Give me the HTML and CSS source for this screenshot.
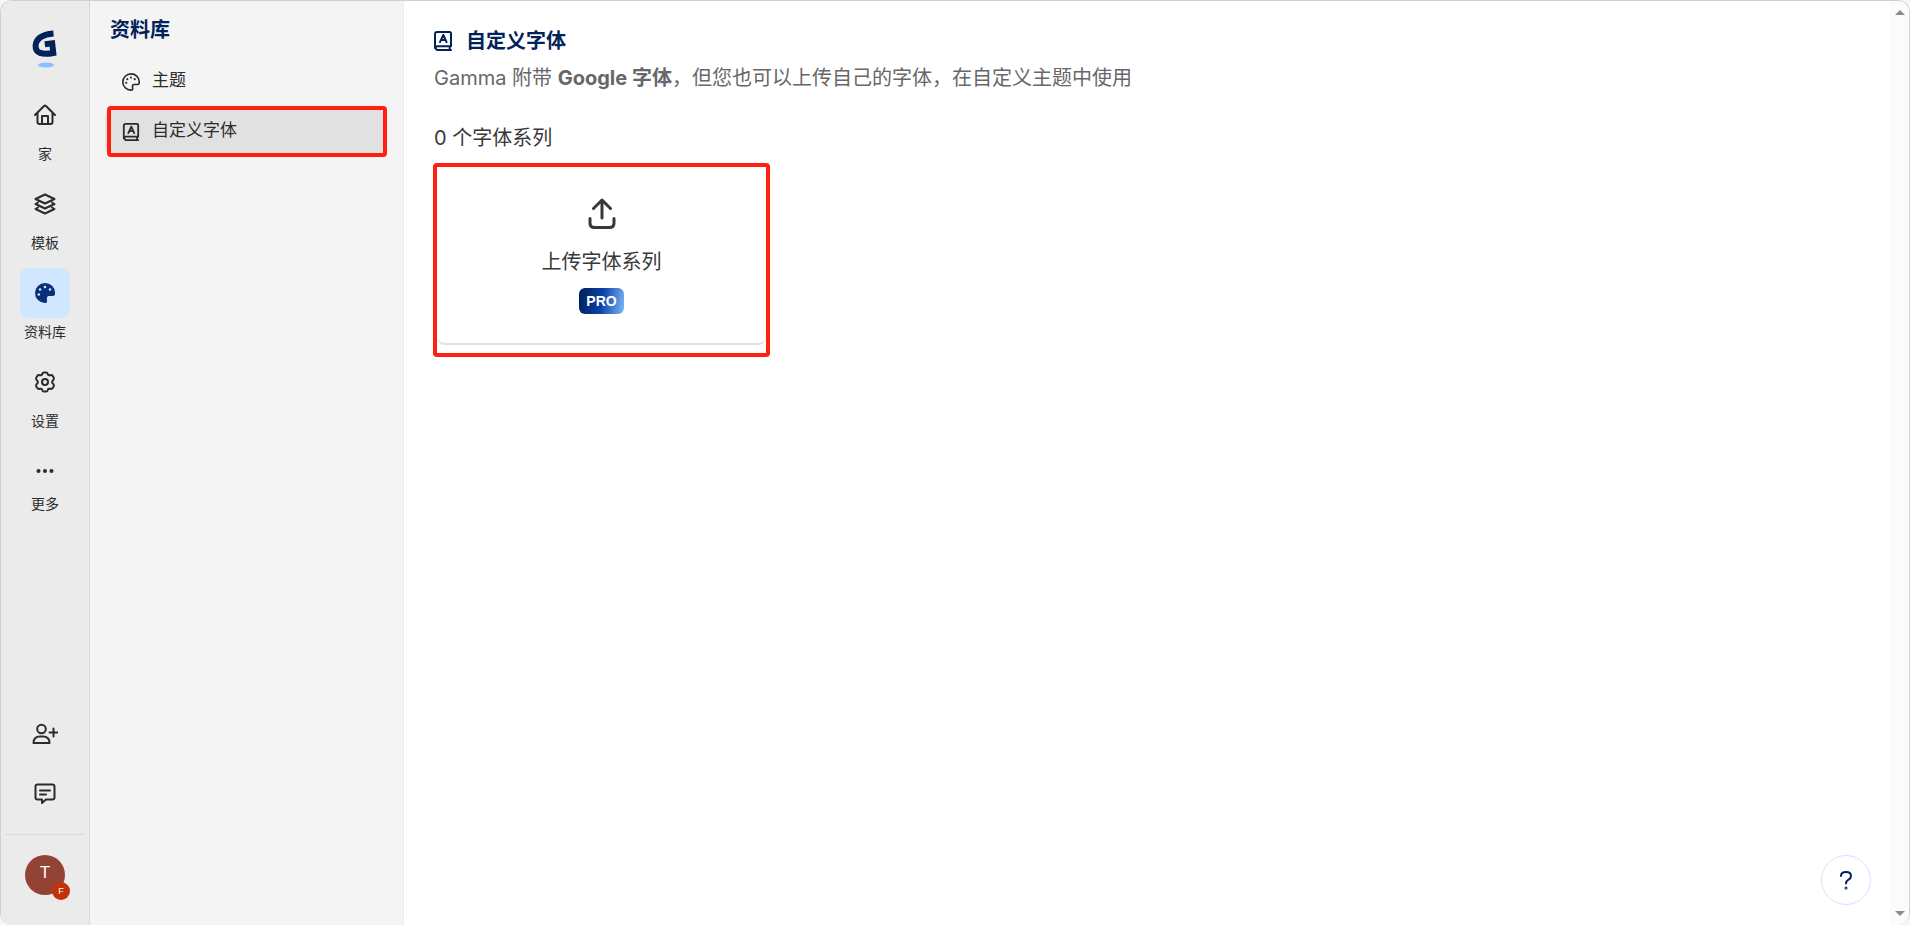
FILE: index.html
```
<!DOCTYPE html>
<html lang="zh-CN">
<head>
    <meta charset="UTF-8">
    <meta name="viewport" content="width=device-width, initial-scale=1.0">
    <title>自定义字体</title>
    <link rel="stylesheet" href="styles.css">
</head>
<body>
    <!-- shared icons -->
    <svg class="sprite" width="0" height="0" aria-hidden="true">
        <symbol id="icon-font-book" viewBox="0 0 18 20">
            <path d="M1 17V3.200Q1 1 3.200 1H15.500Q17 1 17 2.500V15.200H3.100A2 2 0 0 0 3.100 19H17M15.700 15.200V19"/>
            <path d="M6 11.200L9.300 4L12.600 11.200M7.200 9H11.400"/>
        </symbol>
    </svg>

    <div class="app">
        <nav class="rail" aria-label="主导航">
            <a href="#" class="logo" aria-label="Gamma">
                <svg width="26" height="38" viewBox="0 0 26 38">
                    <path d="M21.500 3.500C12.500 4.300 4.200 7 3.600 15.500C3.100 23 10 25.200 21.300 23L20.200 13.300L12.800 14.300" fill="none" stroke="#02225a" stroke-width="6"/>
                    <ellipse cx="14" cy="35" rx="8" ry="2.500" fill="#85c1fb"/>
                </svg>
            </a>
            <a href="#" class="rail-item">
                <span class="rail-icon">
                    <svg width="22" height="22" viewBox="0 0 22 22"><path d="M1 11L10 2Q11 1 12 2L21 11M3.500 9V18Q3.500 20 5.500 20H16.500Q18.500 20 18.500 18V9M8 20V12H14V20"/></svg>
                </span>
                <span>家</span>
            </a>
            <a href="#" class="rail-item">
                <span class="rail-icon">
                    <svg width="22" height="22" viewBox="0 0 22 22"><path d="M1.500 6L11 1.500L20.500 6L11 10.500ZM4 9.500L1.500 11L11 15.500L20.500 11L18 9.500M4 14.500L1.500 16L11 20.500L20.500 16L18 14.500"/></svg>
                </span>
                <span>模板</span>
            </a>
            <a href="#" class="rail-item" aria-current="page">
                <span class="rail-icon active">
                    <svg width="22" height="22" viewBox="0 0 22 22">
                        <path class="solid" d="M11 1A10 10 0 0 0 11 21Q13.500 21 13 18.500Q12.200 14 15 14H18.500Q21.500 14 21 10.500A10 9.600 0 0 0 11 1Z"/>
                        <g class="holes"><circle cx="6" cy="7.500" r="1.300"/><circle cx="11" cy="5" r="1.300"/><circle cx="16" cy="7.500" r="1.300"/><circle cx="4.800" cy="12.500" r="1.300"/></g>
                    </svg>
                </span>
                <span>资料库</span>
            </a>
            <a href="#" class="rail-item">
                <span class="rail-icon">
                    <svg width="22" height="22" viewBox="0 0 22 22"><path d="M8.300 2.800Q8.600 1.500 10 1.500H12Q13.400 1.500 13.700 2.800Q14.100 4.800 16.200 4.200Q17.900 3.600 18.700 4.900L19.700 6.600Q20.400 7.900 19.300 8.900Q16.900 11 19.300 13.100Q20.400 14.100 19.700 15.400L18.700 17.100Q17.900 18.400 16.200 17.800Q14.100 17.200 13.700 19.200Q13.400 20.500 12 20.500H10Q8.600 20.500 8.300 19.200Q7.900 17.200 5.800 17.800Q4.100 18.400 3.300 17.100L2.300 15.400Q1.600 14.100 2.700 13.100Q5.100 11 2.700 8.900Q1.600 7.900 2.300 6.600L3.300 4.900Q4.100 3.600 5.800 4.200Q7.900 4.800 8.300 2.800Z"/><circle cx="11" cy="11" r="3"/></svg>
                </span>
                <span>设置</span>
            </a>
            <a href="#" class="rail-item more">
                <span class="rail-icon">
                    <svg width="22" height="22" viewBox="0 0 22 22"><g class="dots"><circle cx="4.500" cy="11" r="2"/><circle cx="11" cy="11" r="2"/><circle cx="17.500" cy="11" r="2"/></g></svg>
                </span>
                <span>更多</span>
            </a>

            <div class="rail-bottom">
                <button class="rail-button" aria-label="邀请">
                    <svg width="26" height="22" viewBox="0 0 26 22"><circle cx="9.500" cy="6" r="4.300"/><path d="M1.500 20Q1.500 13.500 8 13.500H11Q17.500 13.500 17.500 20ZM17.500 9.500H25.500M21.500 5.500V13.500"/></svg>
                </button>
                <button class="rail-button" aria-label="反馈">
                    <svg width="22" height="22" viewBox="0 0 22 22"><path d="M3.500 1.500H18.500Q20.500 1.500 20.500 3.500V14.500Q20.500 16.500 18.500 16.500H12L8 20V16.500H3.500Q1.500 16.500 1.500 14.500V3.500Q1.500 1.500 3.500 1.500ZM6 7.500H16M6 11.500H12"/></svg>
                </button>
                <div class="account">
                    <button class="avatar" aria-label="账户">T<span class="avatar-badge">F</span></button>
                </div>
            </div>
        </nav>

        <aside class="panel">
            <h2>资料库</h2>
            <a href="#" class="panel-item">
                <svg width="18" height="18" viewBox="0 0 22 22">
                    <path d="M11 1A10 10 0 0 0 11 21Q13.500 21 13 18.500Q12.200 14 15 14H18.500Q21.500 14 21 10.500A10 9.600 0 0 0 11 1Z"/>
                    <g class="dots"><circle cx="6.500" cy="7.500" r="1.300"/><circle cx="11" cy="5.500" r="1.300"/><circle cx="15.500" cy="7.500" r="1.300"/><circle cx="5.200" cy="12" r="1.300"/></g>
                </svg>
                <span>主题</span>
            </a>
            <a href="#" class="panel-item selected" aria-current="page">
                <svg width="18" height="18"><use href="#icon-font-book"/></svg>
                <span>自定义字体</span>
            </a>
        </aside>

        <main class="content">
            <h1><svg width="18" height="20"><use href="#icon-font-book"/></svg>自定义字体</h1>
            <p class="intro">Gamma 附带 <b>Google 字体</b>，但您也可以上传自己的字体，在自定义主题中使用</p>
            <p class="count">0 个字体系列</p>
            <div class="highlight">
                <button class="upload">
                    <svg width="30" height="32" viewBox="0 0 30 32"><path d="M15 20V2M6.500 10.500L15 2L23.500 10.500M3 20.500V25Q3 29.500 7.500 29.500H22.500Q27 29.500 27 25V20.500"/></svg>
                    <span>上传字体系列</span>
                    <span class="pro">PRO</span>
                </button>
            </div>
        </main>

        <div class="scrollbar" aria-hidden="true">
            <span class="arrow up"></span>
            <span class="arrow down"></span>
        </div>
    </div>

    <button class="help" aria-label="帮助">
        <svg width="14" height="20" viewBox="0 0 14 20"><path d="M2 6Q2 2 7 2Q12 2 12 6Q12 8.300 9.500 9.600Q7 11 7 13.500"/><circle cx="7" cy="18" r="0.500"/></svg>
    </button>
</body>
</html>
```
FILE: styles.css
```
* {
    box-sizing: border-box;
}
body {
    margin: 0;
    background-color: #f7f7f7;
    color: #2b2b2d;
    font-family: "Liberation Sans", "Noto Sans CJK SC", sans-serif;
}
a {
    color: inherit;
    text-decoration: none;
}
button {
    padding: 0;
    border: none;
    background: none;
    color: inherit;
    font-family: inherit;
    cursor: pointer;
}
svg {
    flex: none;
    fill: none;
    stroke: currentColor;
    stroke-width: 2;
    stroke-linecap: round;
    stroke-linejoin: round;
}
.sprite {
    position: absolute;
}
.solid, .dots {
    fill: currentColor;
    stroke: none;
}
.holes {
    fill: #d1e6ff;
    stroke: none;
}
.app {
    display: flex;
    min-height: 100vh;
    overflow: hidden;
    border: 1px solid #d0d0d0;
    border-bottom: none;
    border-radius: 12px;
    background-color: #fff;
}

/* icon rail */
.rail {
    display: flex;
    flex-direction: column;
    align-items: center;
    width: 89px;
    padding-top: 29px;
    border-right: 1px solid #dadada;
    background-color: #ebebeb;
}
.logo {
    height: 60px;
}
.logo svg {
    stroke: none;
    stroke-linecap: butt;
    stroke-linejoin: miter;
}
.rail-item {
    display: flex;
    flex-direction: column;
    align-items: center;
    height: 89px;
    gap: 4px;
    font-size: 14px;
    line-height: 20px;
}
.rail-item.more {
    gap: 0;
}
.rail-item.more .rail-icon {
    margin-bottom: -2px;
}
.rail-icon {
    display: flex;
    align-items: center;
    justify-content: center;
    width: 50px;
    height: 50px;
    border-radius: 8px;
}
.rail-icon.active {
    background-color: #d1e6ff;
    color: #092e7a;
}
.rail-bottom {
    display: flex;
    flex-direction: column;
    align-items: center;
    gap: 10px;
    width: 100%;
    margin-top: auto;
    padding: 0 4px;
}
.rail-button {
    display: flex;
    align-items: center;
    justify-content: center;
    width: 50px;
    height: 50px;
}
.account {
    display: flex;
    justify-content: center;
    width: 100%;
    margin-top: 5px;
    padding: 20px 0 30px;
    border-top: 1px solid #dadada;
}
.avatar {
    position: relative;
    width: 40px;
    height: 40px;
    padding-bottom: 4px;
    border-radius: 50%;
    background-color: #924336;
    color: #fff;
    font-size: 17px;
}
.avatar-badge {
    position: absolute;
    right: -5px;
    bottom: -5px;
    width: 18px;
    height: 18px;
    border-radius: 50%;
    background-color: #c2330b;
    font-size: 9px;
    line-height: 18px;
}

/* library panel */
.panel {
    width: 314px;
    padding: 13px 18px 0 15px;
    border-right: 1px solid #ebebeb;
    background-color: #f4f4f4;
}
.panel h2 {
    margin: 0 0 14px 5px;
    color: #02225a;
    font-size: 20px;
    line-height: 32px;
}
.panel-item {
    position: relative;
    display: flex;
    align-items: center;
    gap: 12px;
    height: 44px;
    margin-bottom: 5px;
    padding-left: 17px;
    border-radius: 8px;
    font-size: 17px;
    line-height: 24px;
}
.panel-item span {
    padding-bottom: 3px;
}
.panel-item.selected {
    height: 46px;
    background-color: #e1e1e1;
}
.panel-item.selected::after {
    content: "";
    position: absolute;
    inset: -3px -2px -2px 2px;
    border: 4px solid #ff2010;
    border-radius: 4px;
}

/* main content */
.content {
    flex: 1;
    padding: 25px 28px;
    color: #38383a;
}
.content h1 {
    display: flex;
    align-items: center;
    gap: 14px;
    margin: 0 0 0 2px;
    color: #02225a;
    font-size: 20px;
    line-height: 30px;
}
.intro, .count {
    margin: 0 0 0 2px;
    font-family: Inter, "Noto Sans CJK SC", sans-serif;
    font-size: 20px;
    line-height: 30px;
}
.intro {
    margin-top: 7px;
    margin-bottom: 30px;
    color: #676769;
}
.count {
    margin-bottom: 10px;
}
.highlight {
    width: 337px;
    padding-bottom: 8px;
    margin-left: 1px;
    border: 4px solid #ff2010;
    border-radius: 4px;
}
.upload {
    display: flex;
    flex-direction: column;
    align-items: center;
    width: 100%;
    padding: 31px 0 29px;
    border-bottom: 2px solid #e1e1e3;
    border-radius: 8px;
    font-size: 20px;
    line-height: 30px;
}
.upload svg {
    margin-bottom: 17px;
    stroke-width: 3;
}
.pro {
    margin-top: 11px;
    padding: 0 7px;
    border-radius: 6px;
    background: linear-gradient(100deg, #001f56, #0a40a8 50%, #7eb9f8);
    color: #fff;
    font-size: 14px;
    font-weight: bold;
    line-height: 26px;
}
.scrollbar {
    display: flex;
    flex-direction: column;
    align-items: center;
    justify-content: space-between;
    width: 19px;
    padding: 9px 0;
    background-color: #fbfbfb;
}
.arrow {
    border: 5px solid transparent;
}
.arrow.up {
    border-top: none;
    border-bottom-color: #8b8b8b;
}
.arrow.down {
    border-bottom: none;
    border-top-color: #8b8b8b;
}
.help {
    position: fixed;
    right: 39px;
    bottom: 20px;
    display: flex;
    align-items: center;
    justify-content: center;
    width: 50px;
    height: 50px;
    border: 1px solid #cce4ff;
    border-radius: 50%;
    background-color: #fff;
    color: #02225a;
}
```
